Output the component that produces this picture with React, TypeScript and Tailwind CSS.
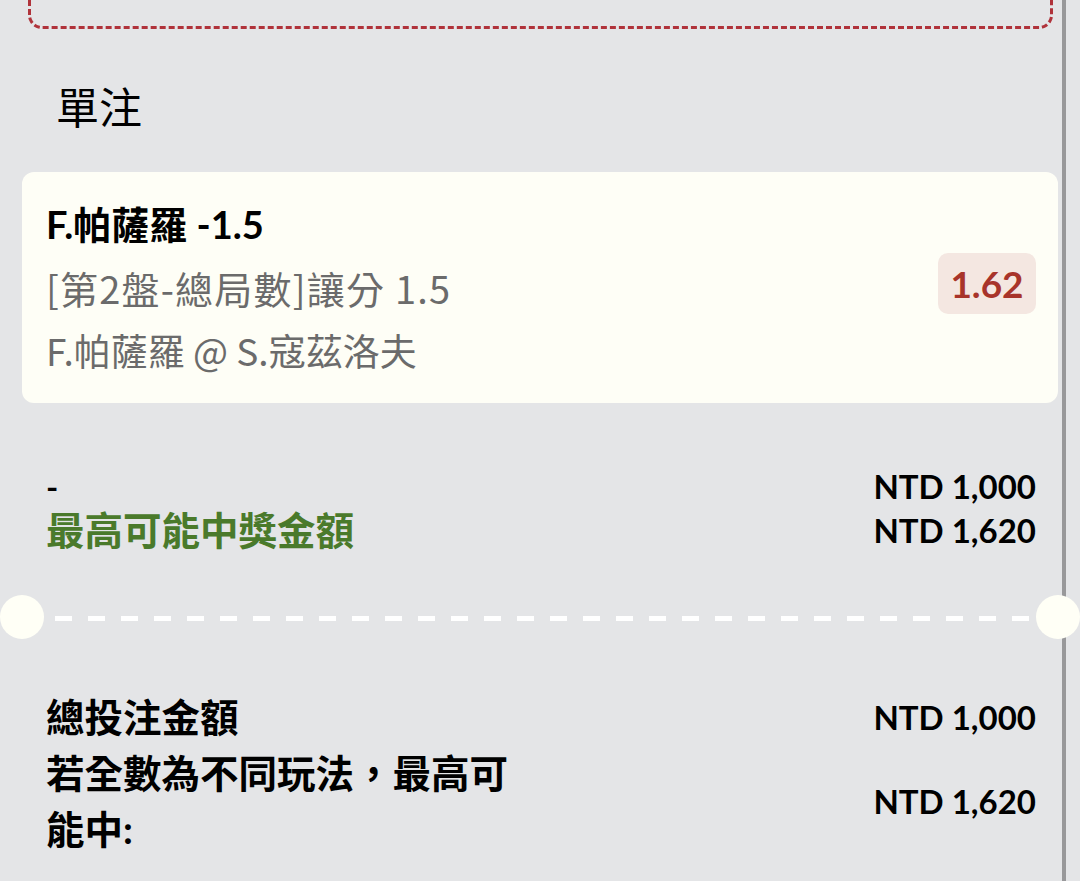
import React from 'react';

const latin = "font-['Lato','Noto_Sans_CJK_TC',sans-serif]";
const cjk = "font-['Noto_Sans_CJK_TC',sans-serif]";

function Divider() {
  return (
    <div className="relative h-[44px] mt-[43px]">
      <div className="absolute left-[22px] right-[22px] top-[21px] h-[5px] bg-[repeating-linear-gradient(90deg,#ffffff_0,#ffffff_17px,transparent_17px,transparent_33px)]" />
      <div className="absolute left-0 top-0 w-[44px] h-[44px] rounded-full bg-[#fffff6]" />
      <div className="absolute left-[1036px] top-0 w-[44px] h-[44px] rounded-full bg-[#fffff6]" />
    </div>
  );
}

export default function App() {
  return (
    <div className={`relative w-[1080px] h-[881px] overflow-hidden bg-[#e4e5e7] ${latin}`}>
      {/* right rail */}
      <div className="absolute top-0 bottom-0 left-[1062px] w-[4px] bg-[#98989a]" />

      <div className="relative w-[1080px]">
        {/* previous box, cut off at the top */}
        <div className="ml-[28px] w-[1025px] h-[80px] -mt-[51px] border-[3px] border-dashed border-[#b0333b] rounded-[14px]" />

        <h2 className={`ml-[56px] mt-[46px] text-[43px] leading-[60px] font-normal text-black ${cjk}`}>單注</h2>

        <div className="ml-[22px] mt-[37px] w-[1036px] rounded-[12px] bg-[#fefef6] pl-[24px] pr-[22px] pt-[21px] pb-[21px] flex items-center">
          <div className="flex-1 leading-[63px]">
            <div className="text-[38px] font-bold text-black">F.帕薩羅 -1.5</div>
            <div className={`text-[38px] tracking-[1.2px] text-[#6b6b6b] ${cjk}`}>[第2盤-總局數]讓分 1.5</div>
            <div className={`text-[37px] text-[#6b6b6b] ${cjk}`}>F.帕薩羅 @ S.寇茲洛夫</div>
          </div>
          <div className="w-[98px] h-[61px] -mt-[8px] rounded-[10px] bg-[#f4e7e1] flex items-center justify-center text-[37px] font-bold text-[#a8342a]">
            1.62
          </div>
        </div>

        <div className="ml-[46px] w-[990px] mt-[61px] flex justify-between">
          <div className="leading-[44px]">
            <div className="text-[33px] font-bold text-black">-</div>
            <div className="text-[38.5px] font-bold text-[#4a7a2b]">最高可能中獎金額</div>
          </div>
          <div className="text-right text-[33px] leading-[44px] font-bold text-black">
            <div>NTD 1,000</div>
            <div>NTD 1,620</div>
          </div>
        </div>

        <Divider />

        <div className="ml-[46px] w-[990px] mt-[50px] flex justify-between text-black font-bold">
          <div className="w-[480px] text-[38.5px] leading-[56px]">
            <div>總投注金額</div>
            <div>若全數為不同玩法，最高可能中:</div>
          </div>
          <div className="text-right text-[33px]">
            <div className="leading-[56px]">NTD 1,000</div>
            <div className="leading-[112px]">NTD 1,620</div>
          </div>
        </div>
      </div>
    </div>
  );
}
